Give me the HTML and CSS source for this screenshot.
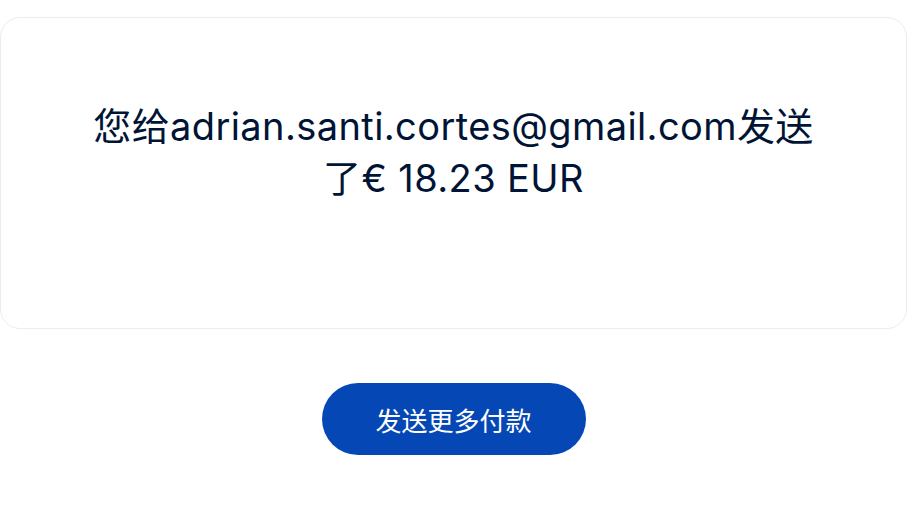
FILE: index.html
```html
<!DOCTYPE html>
<html lang="zh-CN">

<head>
    <meta charset="UTF-8" />
    <meta name="viewport" content="width=device-width, initial-scale=1.0" />
    <title>付款已发送</title>
    <link rel="stylesheet" href="styles.css">
</head>

<body>
    <div class="page">
        <div class="result-card">
            <h1 class="result-title">您给adrian.santi.cortes@gmail.com发送了€ 18.23 EUR</h1>
        </div>

        <div class="actions">
            <button class="send-more">发送更多付款</button>
        </div>
    </div>
</body>

</html>
```

FILE: styles.css
```css
body {
    margin: 0;
    font-family: Inter, "Noto Sans CJK SC", sans-serif;
    background: #fff;
    color: #001435;
}

.page {
    padding-top: 17px;
}

.result-card {
    border: 1px solid #ececec;
    border-radius: 20px;
    padding: 82px 80px 120px;
    box-sizing: border-box;
    height: 312px;
}

.result-title {
    margin: 0;
    font-size: 38px;
    font-weight: 400;
    line-height: 52px;
    letter-spacing: 0.4px;
    text-align: center;
}

.actions {
    display: flex;
    justify-content: center;
    margin-top: 54px;
}

.send-more {
    width: 264px;
    height: 72px;
    border: none;
    border-radius: 36px;
    background-color: #0447b5;
    color: #fff;
    font-family: Inter, "Noto Sans CJK SC", sans-serif;
    font-size: 26px;
    cursor: pointer;
}
```
